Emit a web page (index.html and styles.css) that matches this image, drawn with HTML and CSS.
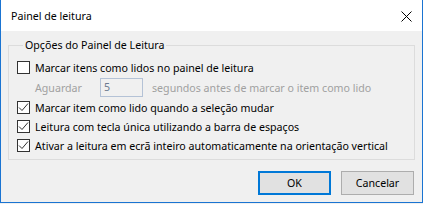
FILE: index.html
```html
<!DOCTYPE html>
<html lang="pt">
<head>
    <meta charset="UTF-8">
    <title>Painel de leitura</title>
    <link rel="stylesheet" href="styles.css">
</head>
<body>
<div class="window">
    <div class="titlebar">
        <span class="title">Painel de leitura</span>
        <svg class="close" width="11" height="11" viewBox="0 0 11 11">
            <path d="M0.5 0.5 L10.5 10.5 M10.5 0.5 L0.5 10.5" stroke="#000" stroke-width="1" fill="none"/>
        </svg>
    </div>
    <div class="content">
        <fieldset class="group">
            <legend>Opções do Painel de Leitura</legend>
            <div class="row">
                <span class="check"></span>
                <span>Marcar itens como lidos no painel de leitura</span>
            </div>
            <div class="row wait">
                <span>Aguardar</span>
                <span class="field">5</span>
                <span>segundos antes de marcar o item como lido</span>
            </div>
            <div class="row">
                <span class="check on"><svg width="11" height="11" viewBox="0 0 11 11"><path d="M1 5.5 L4 8.5 L10 1.5" stroke="#333" stroke-width="1" fill="none"/></svg></span>
                <span>Marcar item como lido quando a seleção mudar</span>
            </div>
            <div class="row">
                <span class="check on"><svg width="11" height="11" viewBox="0 0 11 11"><path d="M1 5.5 L4 8.5 L10 1.5" stroke="#333" stroke-width="1" fill="none"/></svg></span>
                <span>Leitura com tecla única utilizando a barra de espaços</span>
            </div>
            <div class="row">
                <span class="check on"><svg width="11" height="11" viewBox="0 0 11 11"><path d="M1 5.5 L4 8.5 L10 1.5" stroke="#333" stroke-width="1" fill="none"/></svg></span>
                <span>Ativar a leitura em ecrã inteiro automaticamente na orientação vertical</span>
            </div>
        </fieldset>
        <div class="buttons">
            <button class="btn default">OK</button>
            <button class="btn">Cancelar</button>
        </div>
    </div>
</div>
</body>
</html>
```
FILE: styles.css
```css
* {
    margin: 0;
    padding: 0;
    box-sizing: border-box;
}

body {
    width: 423px;
    height: 204px;
    background: #f0f0f0;
    font-family: "Noto Sans", sans-serif;
    font-size: 10.65px;
    color: #000;
    white-space: nowrap;
}

.window {
    height: 203px;
    border: 1px solid #1a74d2;
    border-top: none;
    background: #f0f0f0;
}

.titlebar {
    height: 31px;
    background: #fff;
    display: flex;
    align-items: center;
    justify-content: space-between;
    padding: 0 10px 0 10px;
}

.title {
    margin-top: 1px;
}

.close {
    margin-top: 1px;
}

.content {
    padding: 6px 7px 0 7px;
}

.group {
    border: 1px solid #dcdcdc;
    padding: 5px 8px 6px 8px;
    height: 123px;
}

.group legend {
    margin-left: 6px;
    padding: 0 2px;
    line-height: 16px;
}

.row {
    display: flex;
    align-items: center;
    height: 19px;
    gap: 5px;
}

.check {
    width: 13px;
    height: 13px;
    border: 1px solid #333;
    background: #fff;
    display: flex;
    align-items: center;
    justify-content: center;
    flex: none;
}

.wait {
    color: #a0a0a0;
    padding-left: 18px;
    height: 21px;
    gap: 0;
}

.field {
    width: 43px;
    height: 19px;
    border: 1px solid #b4c2d6;
    color: #6d7b90;
    padding-left: 3px;
    line-height: 17px;
    margin: 0 9px 0 18px;
}

.buttons {
    display: flex;
    justify-content: flex-end;
    gap: 10px;
    margin-top: 11px;
    padding-right: 1px;
}

.btn {
    width: 73px;
    height: 24px;
    font-family: "Noto Sans", sans-serif;
    font-size: 10.65px;
    background: #e1e1e1;
    border: 1px solid #adadad;
    color: #000;
}

.btn.default {
    border: 2px solid #0078d7;
}
```
